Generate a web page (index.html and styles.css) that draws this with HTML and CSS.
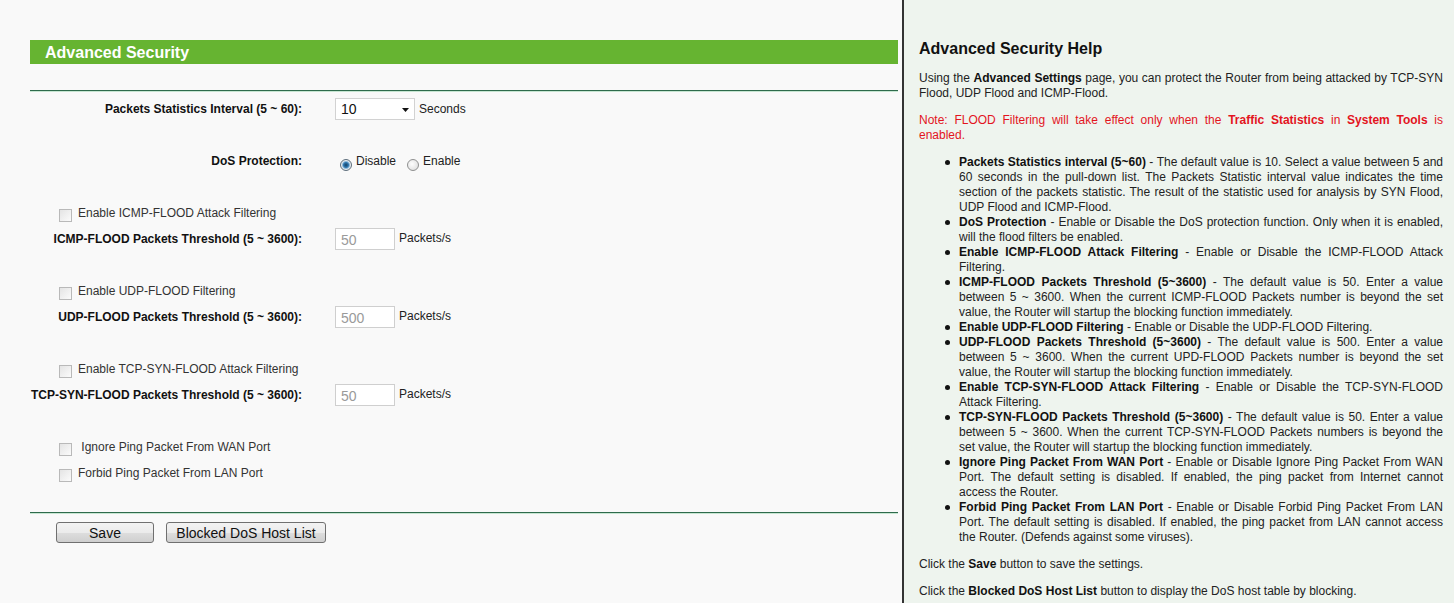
FILE: index.html
```html
<!DOCTYPE html>
<html lang="en">

<head>
    <meta charset="UTF-8">
    <title>Advanced Security</title>
    <link rel="stylesheet" href="styles.css">
</head>

<body>
    <div class="frames">
        <!-- settings form -->
        <div class="settings">
            <div class="title-bar">Advanced Security</div>
            <div class="rule"></div>

            <div class="form">
                <div class="row">
                    <label class="field-label">Packets Statistics Interval (5 ~ 60):</label>
                    <div class="field">
                        <span class="select-wrap">
                            <select class="select">
                                <option>10</option>
                                <option>20</option>
                                <option>30</option>
                                <option>40</option>
                                <option>50</option>
                                <option>60</option>
                            </select>
                            <svg class="select-arrow" width="7" height="4" viewBox="0 0 7 4"><polygon points="0,0 7,0 3.5,4" fill="#111"/></svg>
                        </span>
                        <span class="unit-inline">Seconds</span>
                    </div>
                </div>

                <div class="row spaced">
                    <label class="field-label">DoS Protection:</label>
                    <div class="field">
                        <input type="radio" class="radio" name="dos" checked>
                        <span class="radio-text">Disable</span>
                        <input type="radio" class="radio" name="dos">
                        <span class="radio-text">Enable</span>
                    </div>
                </div>

                <div class="check-row spaced">
                    <input type="checkbox" class="checkbox">
                    <span>Enable ICMP-FLOOD Attack Filtering</span>
                </div>
                <div class="row">
                    <label class="field-label">ICMP-FLOOD Packets Threshold (5 ~ 3600):</label>
                    <div class="field">
                        <input type="text" class="text-input" value="50" disabled>
                        <span class="unit">Packets/s</span>
                    </div>
                </div>

                <div class="check-row spaced">
                    <input type="checkbox" class="checkbox">
                    <span>Enable UDP-FLOOD Filtering</span>
                </div>
                <div class="row">
                    <label class="field-label">UDP-FLOOD Packets Threshold (5 ~ 3600):</label>
                    <div class="field">
                        <input type="text" class="text-input" value="500" disabled>
                        <span class="unit">Packets/s</span>
                    </div>
                </div>

                <div class="check-row spaced">
                    <input type="checkbox" class="checkbox">
                    <span>Enable TCP-SYN-FLOOD Attack Filtering</span>
                </div>
                <div class="row">
                    <label class="field-label">TCP-SYN-FLOOD Packets Threshold (5 ~ 3600):</label>
                    <div class="field">
                        <input type="text" class="text-input" value="50" disabled>
                        <span class="unit">Packets/s</span>
                    </div>
                </div>

                <div class="check-row spaced">
                    <input type="checkbox" class="checkbox">
                    <span>&nbsp;Ignore Ping Packet From WAN Port</span>
                </div>
                <div class="check-row">
                    <input type="checkbox" class="checkbox">
                    <span>Forbid Ping Packet From LAN Port</span>
                </div>
            </div>

            <div class="rule bottom"></div>
            <div class="buttons">
                <button class="btn btn-save">Save</button>
                <button class="btn btn-list">Blocked DoS Host List</button>
            </div>
        </div>

        <!-- help frame -->
        <div class="help">
            <h2>Advanced Security Help</h2>
            <p>Using the <b>Advanced Settings</b> page, you can protect the Router from being attacked by TCP-SYN Flood, UDP Flood and ICMP-Flood.</p>
            <p class="note">Note: FLOOD Filtering will take effect only when the <b>Traffic Statistics</b> in <b>System Tools</b> is enabled.</p>
            <ul>
                <li><b>Packets Statistics interval (5~60)</b> - The default value is 10. Select a value between 5 and 60 seconds in the pull-down list. The Packets Statistic interval value indicates the time section of the packets statistic. The result of the statistic used for analysis by SYN Flood, UDP Flood and ICMP-Flood.</li>
                <li><b>DoS Protection</b> - Enable or Disable the DoS protection function. Only when it is enabled, will the flood filters be enabled.</li>
                <li><b>Enable ICMP-FLOOD Attack Filtering</b> - Enable or Disable the ICMP-FLOOD Attack Filtering.</li>
                <li><b>ICMP-FLOOD Packets Threshold (5~3600)</b> - The default value is 50. Enter a value between 5 ~ 3600. When the current ICMP-FLOOD Packets number is beyond the set value, the Router will startup the blocking function immediately.</li>
                <li><b>Enable UDP-FLOOD Filtering</b> - Enable or Disable the UDP-FLOOD Filtering.</li>
                <li><b>UDP-FLOOD Packets Threshold (5~3600)</b> - The default value is 500. Enter a value between 5 ~ 3600. When the current UPD-FLOOD Packets number is beyond the set value, the Router will startup the blocking function immediately.</li>
                <li><b>Enable TCP-SYN-FLOOD Attack Filtering</b> - Enable or Disable the TCP-SYN-FLOOD Attack Filtering.</li>
                <li><b>TCP-SYN-FLOOD Packets Threshold (5~3600)</b> - The default value is 50. Enter a value between 5 ~ 3600. When the current TCP-SYN-FLOOD Packets numbers is beyond the set value, the Router will startup the blocking function immediately.</li>
                <li><b>Ignore Ping Packet From WAN Port</b> - Enable or Disable Ignore Ping Packet From WAN Port. The default setting is disabled. If enabled, the ping packet from Internet cannot access the Router.</li>
                <li><b>Forbid Ping Packet From LAN Port</b> - Enable or Disable Forbid Ping Packet From LAN Port. The default setting is disabled. If enabled, the ping packet from LAN cannot access the Router. (Defends against some viruses).</li>
            </ul>
            <p>Click the <b>Save</b> button to save the settings.</p>
            <p>Click the <b>Blocked DoS Host List</b> button to display the DoS host table by blocking.</p>
        </div>
    </div>
</body>

</html>
```

FILE: styles.css
```css
* {
    margin: 0;
    padding: 0;
    box-sizing: border-box;
    font-family: "Liberation Sans", Arial, sans-serif;
}

html,
body {
    height: 100%;
    overflow: hidden;
}

.frames {
    display: flex;
    height: 100%;
}

/* ---- settings frame ---- */

.settings {
    width: 902px;
    flex-shrink: 0;
    background-color: #f9f9f9;
    padding: 40px 4px 0 30px;
    font-size: 12px;
    color: #222;
}

.title-bar {
    height: 24px;
    line-height: 25px;
    background-color: #66b431;
    color: #fff;
    font-size: 16px;
    font-weight: bold;
    padding-left: 15px;
}

.rule {
    margin-top: 26px;
    height: 2px;
    border-top: 1px solid #2f6b4c;
    border-bottom: 1px solid #c7e6d2;
}

.rule.bottom {
    margin-top: 26px;
}

.form {
    padding-top: 4px;
}

.row {
    display: grid;
    grid-template-columns: 272px 1fr;
    column-gap: 33px;
    align-items: center;
    height: 26px;
}

.spaced {
    margin-top: 26px;
}

.field-label {
    text-align: right;
    font-weight: bold;
    color: #111;
}

.field {
    display: flex;
    align-items: center;
}

.select-wrap {
    position: relative;
    display: inline-block;
}

.select {
    appearance: none;
    width: 80px;
    height: 22px;
    border: 1px solid #d2d2d2;
    background-color: #fff;
    font-size: 14px;
    padding-left: 5px;
    color: #111;
    outline: none;
}

.select-arrow {
    position: absolute;
    right: 6px;
    top: 10px;
    pointer-events: none;
}

.unit-inline {
    margin-left: 4px;
}

.text-input {
    width: 60px;
    height: 22px;
    border: 1px solid #cfcfcf;
    background-color: #fff;
    color: #9a9a9a;
    font-size: 14px;
    padding: 2px 5px 0;
}

.unit {
    margin-left: 4px;
    margin-bottom: 3px;
}

.radio {
    appearance: none;
    width: 12px;
    height: 12px;
    border-radius: 50%;
    border: 1px solid #8f9090;
    background: radial-gradient(circle at 40% 40%, #fdfdfd, #d9d9d9);
    margin: 7px 0 0 5px;
}

.radio:checked {
    border-color: #5e6e7c;
    background: radial-gradient(circle at 50% 50%, #153f63 0, #2f78b0 2.5px, #8cb7d9 3.5px, #e9eef2 4.5px, #d6d6d6 6px);
}

.radio-text {
    margin-left: 4px;
}

.radio + .radio-text + .radio {
    margin-left: 11px;
}

.check-row {
    display: flex;
    align-items: center;
    height: 26px;
    padding-left: 29px;
    color: #333;
}

.checkbox {
    appearance: none;
    width: 13px;
    height: 13px;
    border: 1px solid #b9b9b9;
    background: linear-gradient(135deg, #e4e4e4, #fbfbfb);
    margin: 4px 6px 0 0;
}

.buttons {
    display: flex;
    gap: 12px;
    padding: 8px 0 0 26px;
}

.btn {
    height: 21px;
    font-size: 14px;
    color: #111;
    border: 1px solid #707070;
    border-radius: 3px;
    background: linear-gradient(#f3f3f3 0%, #ebebeb 50%, #dddddd 51%, #cfcfcf 100%);
}

.btn-save {
    width: 98px;
}

.btn-list {
    width: 160px;
}

/* ---- help frame ---- */

.help {
    flex-grow: 1;
    background-color: #eef4ee;
    border-left: 2px solid #333;
    padding: 39px 11px 0 15px;
    font-size: 12px;
    line-height: 15px;
    color: #222;
}

.help h2 {
    font-size: 16px;
    line-height: 20px;
    color: #111;
    margin-bottom: 12px;
}

.help p,
.help ul {
    text-align: justify;
    margin-bottom: 12px;
}

.help .note {
    color: #e3141e;
}

.help ul {
    list-style: none;
    padding-left: 40px;
}

/* round bullet drawn beside each item */
.help li {
    position: relative;
}

.help li::before {
    content: "";
    position: absolute;
    left: -14px;
    top: 5px;
    width: 5px;
    height: 5px;
    border-radius: 50%;
    background-color: #111;
}

.help p b,
.help li b {
    color: #111;
}

.help .note b {
    color: #e3141e;
}
```
